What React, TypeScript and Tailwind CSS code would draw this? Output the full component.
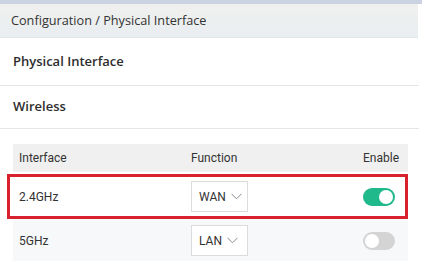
import { useState } from "react";

type Row = { name: string; fn: string; on: boolean };

const ROWS: Row[] = [
  { name: "2.4GHz", fn: "WAN", on: true },
  { name: "5GHz", fn: "LAN", on: false },
];

function Chevron() {
  return (
    <svg width="11" height="7" viewBox="0 0 11 7" fill="none" aria-hidden>
      <path d="M0.5 0.8 L5.5 5.8 L10.5 0.8" stroke="#8a8a8a" strokeWidth="1" />
    </svg>
  );
}

function Toggle({ on, onClick }: { on: boolean; onClick: () => void }) {
  return (
    <button
      onClick={onClick}
      className={`flex h-[18px] w-[32px] items-center rounded-full px-[2px] ${
        on ? "justify-end bg-[#1fb98b]" : "justify-start bg-[#d4d4d4]"
      }`}
    >
      <span className="h-[14px] w-[14px] rounded-full bg-white" />
    </button>
  );
}

export default function App() {
  const [rows, setRows] = useState(ROWS);

  return (
    <div className="h-[261px] w-[422px] overflow-hidden bg-white font-['Open_Sans',sans-serif] text-[#333]">
      <div className="h-[4px] bg-[#cbd3e2]" />
      <div className="mr-[4px] flex h-[34px] items-center border-b border-[#e2e5e8] bg-gradient-to-b from-[#f0f0ee] to-[#e9eef1] pl-[11px] text-[12.7px]">
        Configuration / Physical Interface
      </div>

      <div className="mr-[3px] flex h-[48px] items-center border-b border-[#e6e6e6] pl-[13px] text-[13px] font-semibold text-[#2d2d2d]">
        Physical Interface
      </div>
      <div className="mr-[3px] flex h-[43px] items-center border-b border-[#e6e6e6] pl-[13px] text-[13px] font-semibold text-[#2d2d2d]">
        Wireless
      </div>

      <div className="mt-[15px] font-['Roboto',sans-serif] text-[12px] text-[#333]">
        <div className="ml-[13px] mr-[14px] grid h-[28px] grid-cols-[172px_172px_auto] items-center bg-[#f0f0f0] pl-[6px]">
          <span>Interface</span>
          <span>Function</span>
          <span>Enable</span>
        </div>
        {rows.map((r, i) => (
          <div
            key={r.name}
            className={
              i === 0
                ? "ml-[7px] mr-[14px] mt-[2px] border-[3px] border-[#d7222d]"
                : "ml-[13px] mr-[14px]"
            }
          >
            <div
              className={`grid grid-cols-[172px_172px_auto] items-center ${
                i === 0 ? "h-[39px] bg-white pl-[9px]" : "h-[43px] bg-[#f7f8f9] pl-[6px]"
              }`}
            >
              <span>{r.name}</span>
              <span className="flex h-[31px] w-[57px] items-center gap-[5px] border border-[#dcdcdc] bg-white pl-[7px]">
                {r.fn}
                <Chevron />
              </span>
              <Toggle
                on={r.on}
                onClick={() =>
                  setRows(rows.map((x) => (x.name === r.name ? { ...x, on: !x.on } : x)))
                }
              />
            </div>
          </div>
        ))}
      </div>
    </div>
  );
}
